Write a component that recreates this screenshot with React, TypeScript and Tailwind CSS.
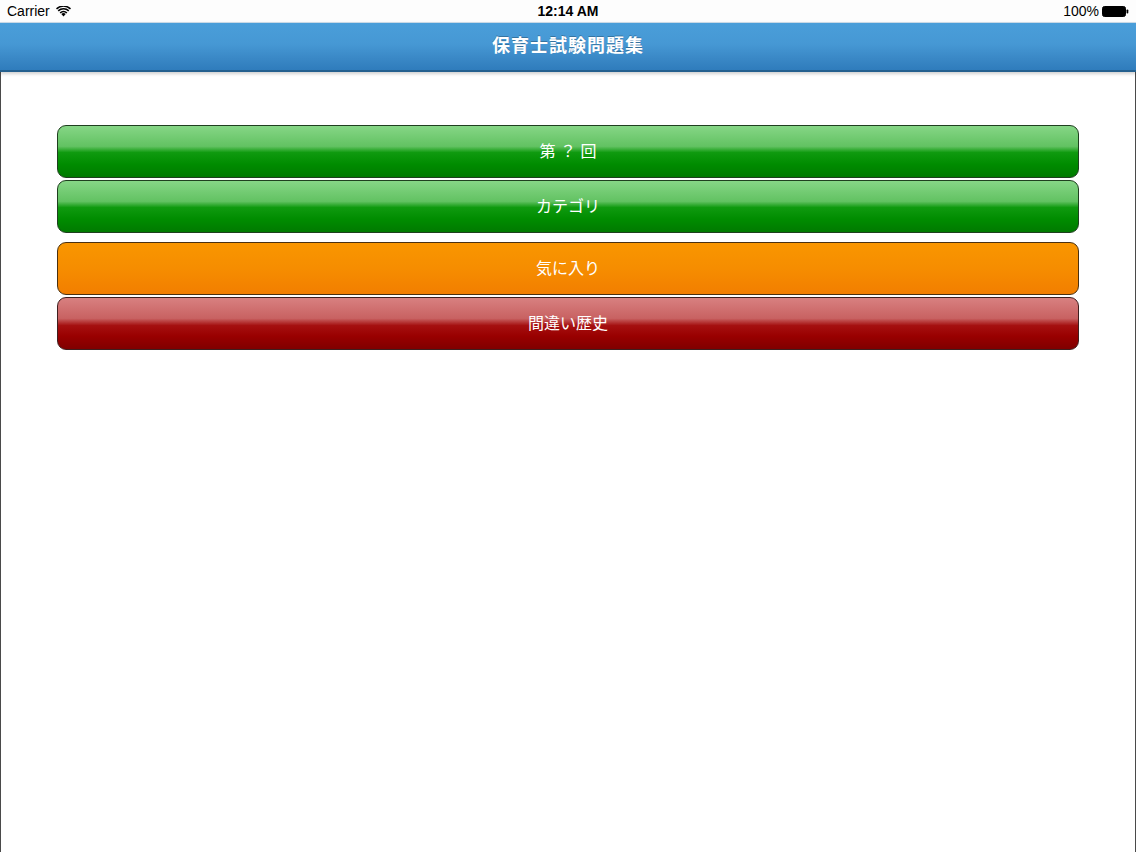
import React from "react";

const font = { fontFamily: '"Helvetica Neue", "Liberation Sans", "Noto Sans CJK JP", sans-serif' };

function Wifi() {
  return (
    <svg width="15" height="11" viewBox="0 0 15 11" className="ml-[6px]">
      <path d="M7.5 10.6 L5.3 8.1 A3.2 3.2 0 0 1 9.7 8.1 Z" fill="#000" />
      <path d="M3.6 6.4 A5.6 5.6 0 0 1 11.4 6.4 L10.3 7.6 A4 4 0 0 0 4.7 7.6 Z" fill="#000" />
      <path d="M1.7 4.3 A8.4 8.4 0 0 1 13.3 4.3 L12.2 5.5 A6.8 6.8 0 0 0 2.8 5.5 Z" fill="#000" />
      <path d="M0 2.3 A11 11 0 0 1 15 2.3 L14 3.4 A9.5 9.5 0 0 0 1 3.4 Z" fill="#000" />
    </svg>
  );
}

function Battery() {
  return (
    <svg width="27" height="11" viewBox="0 0 27 11" className="ml-[3px]">
      <rect x="0.5" y="0.5" width="23" height="10" rx="2" fill="#000" stroke="#000" />
      <rect x="24.5" y="3.5" width="1.8" height="4" rx="0.8" fill="#000" />
    </svg>
  );
}

type Btn = { label: string; cls: string; mt: string };

const buttons: Btn[] = [
  {
    label: "第 ？ 回",
    cls: "bg-[linear-gradient(to_bottom,#86d686_0%,#62c262_40%,#0f9a0f_52%,#008c00_75%,#007a00_100%)] border-[#1f3f1f]",
    mt: "mt-0",
  },
  {
    label: "カテゴリ",
    cls: "bg-[linear-gradient(to_bottom,#86d686_0%,#62c262_40%,#0f9a0f_52%,#008c00_75%,#007a00_100%)] border-[#1f3f1f]",
    mt: "mt-[2px]",
  },
  {
    label: "気に入り",
    cls: "bg-[linear-gradient(to_bottom,#f99600_0%,#f68d00_50%,#f27e00_100%)] border-[#4a3010]",
    mt: "mt-[9px]",
  },
  {
    label: "間違い歴史",
    cls: "bg-[linear-gradient(to_bottom,#d88080_0%,#c86262_40%,#a51010_54%,#990000_75%,#800000_100%)] border-[#3f1f1f]",
    mt: "mt-[2px]",
  },
];

export default function App() {
  return (
    <div className="w-[1136px] h-[852px] bg-white overflow-hidden flex flex-col" style={font}>
      {/* status bar */}
      <div className="h-[22px] flex items-center justify-between px-[7px] text-[14px] text-black relative bg-[#fdfdfd]">
        <div className="flex items-center">
          <span>Carrier</span>
          <Wifi />
        </div>
        <div className="absolute left-0 right-0 text-center font-semibold pointer-events-none">12:14 AM</div>
        <div className="flex items-center pr-0">
          <span>100%</span>
          <Battery />
        </div>
      </div>
      {/* nav bar */}
      <div className="h-[50px] flex items-center justify-center bg-[linear-gradient(to_bottom,#4a9ed9_0%,#4698d4_45%,#3a88c6_75%,#2f7cbc_100%)] border-t border-t-[#c9d9e6] border-b-2 border-b-[#24608f] shadow-[0_2px_3px_rgba(0,0,0,0.18)] relative z-10">
        <span className="text-white text-[18px] font-bold tracking-[1px] [text-shadow:0_-1px_0_rgba(0,0,0,0.25)]">
          保育士試験問題集
        </span>
      </div>
      {/* content */}
      <div className="flex-1 border-l border-r border-[#4a4a4a] px-[56px] pt-[53px] flex flex-col">
        {buttons.map((b) => (
          <div
            key={b.label}
            className={`${b.mt} h-[53px] shrink-0 rounded-[9px] border flex items-center justify-center text-white text-[16px] ${b.cls}`}
          >
            {b.label}
          </div>
        ))}
      </div>
    </div>
  );
}
